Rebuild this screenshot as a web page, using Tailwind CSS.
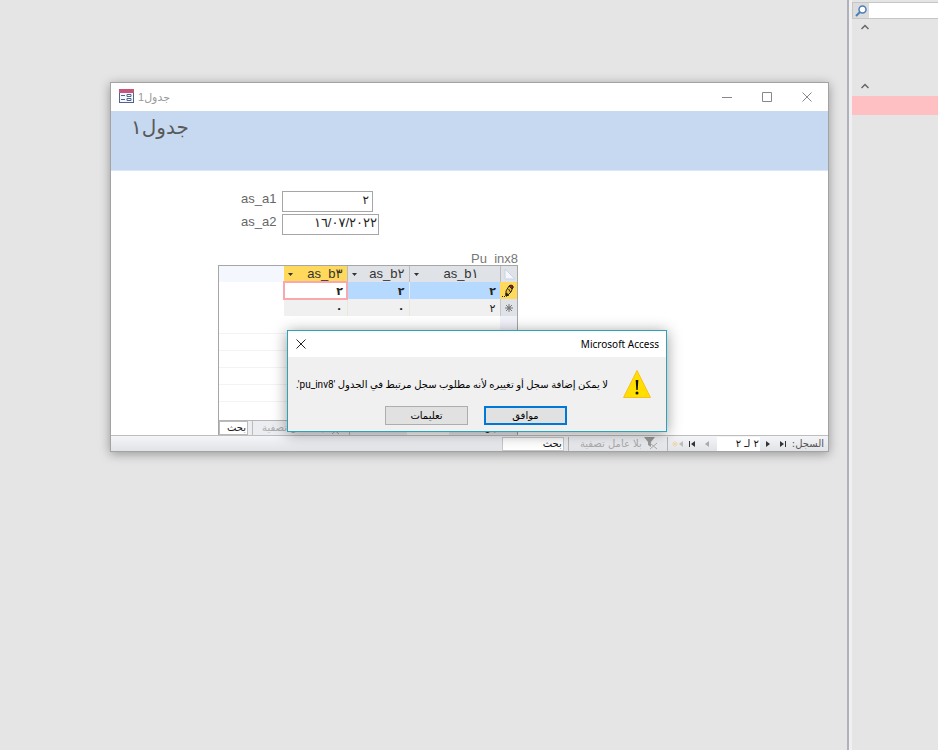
<!DOCTYPE html>
<html lang="ar">
<head>
    <meta charset="UTF-8">
    <title>جدول1</title>
    <meta name="viewport" content="width=device-width, initial-scale=1.0">
    <script src="https://cdn.jsdelivr.net/npm/@tailwindcss/browser@4"></script>
</head>
<body class="flex min-h-screen bg-[#e5e5e5] font-['Liberation_Sans','DejaVu_Sans',sans-serif] text-[#222]">

<main class="relative flex-1 pt-[82px] pl-[110px] pr-[18px]">
    <!-- Form window -->
    <section class="border border-[#a3a3a3] bg-white shadow-[0_2px_10px_rgba(0,0,0,0.35)]">
        <header class="flex h-7 items-center pr-px pl-2 text-[#999]">
            <svg class="mr-1 mb-[2px] h-[14px] w-[15px]" viewBox="0 0 15 14">
                <rect x="0.5" y="0.5" width="14" height="13" fill="#f4f7fc" stroke="#50648f"/>
                <rect width="15" height="4" fill="#c4567c"/>
                <path d="M2 6.5h4M2 10.5h4" stroke="#50648f"/>
                <path d="M8 5.5h4v2h-4zM8 9.5h4v2h-4z" fill="#fff" stroke="#50648f"/>
            </svg>
            <h1 class="flex-1 text-left text-[11px]" dir="rtl">جدول1</h1>
            <button class="flex h-7 w-10 items-center justify-center" aria-label="تصغير">
                <svg class="h-[10px] w-[10px]" viewBox="0 0 10 10"><path d="M0 5.500h10" stroke="#888"/></svg>
            </button>
            <button class="flex h-7 w-10 items-center justify-center" aria-label="تكبير">
                <svg class="h-[10px] w-[10px]" viewBox="0 0 10 10"><path d="M.5 .5h9v9h-9z" fill="none" stroke="#888"/></svg>
            </button>
            <button class="flex h-7 w-10 items-center justify-center" aria-label="إغلاق">
                <svg class="h-[10px] w-[10px]" viewBox="0 0 10 10"><path d="M.5 .5l9 9M9.500 .5l-9 9" stroke="#888"/></svg>
            </button>
        </header>

        <div class="h-[60px] border-b border-[#dce7f5] bg-[#c6d9f1] pl-5">
            <h2 class="inline-block text-xl leading-8 text-[#595959]" dir="rtl">جدول١</h2>
        </div>

        <div class="pl-[107px] pt-5">
            <!-- Fields -->
            <form class="pl-[23px] text-[13px] leading-4 text-[#666]">
                <div class="mb-[2px] flex">
                    <label for="as_a1" class="w-[41px]">as_a1</label>
                    <input id="as_a1" value="٢" dir="rtl" class="h-[21px] w-[91px] border border-[#a6a6a6] bg-white px-[3px] pb-1 text-[12px] text-[#222]">
                </div>
                <div class="flex">
                    <label for="as_a2" class="w-[41px]">as_a2</label>
                    <input id="as_a2" value="١٦/٠٧/٢٠٢٢" dir="ltr" class="h-[21px] w-[97px] border border-[#a6a6a6] bg-white px-px pb-1 text-right text-[13px] text-[#222]">
                </div>
            </form>

            <!-- Subform -->
            <div class="mt-4 w-[300px]">
                <h3 class="h-[14px] text-right text-[13px] leading-4 text-[#777]">Pu_inx8</h3>
                <div class="relative flex h-[170px] flex-col overflow-hidden border border-b-0 border-[#a6a6a6] bg-white">
                    <table class="w-full table-fixed border-collapse text-[11px] leading-4" dir="ltr">
                        <colgroup>
                            <col class="w-[65px]">
                            <col class="w-[63px]">
                            <col class="w-[62px]">
                            <col>
                            <col class="w-[17px]">
                        </colgroup>
                        <thead>
                            <tr class="h-4 bg-[#dfe3e8] text-[13px] text-[#333]">
                                <td class="bg-[#f5f7fe]"></td>
                                <th class="border-r border-[#b8bcc2] bg-[#ffd95c] p-0 font-normal">
                                    <div class="flex h-4 items-center justify-between px-1">
                                        <svg class="h-[3px] w-[5px]" viewBox="0 0 5 3"><path d="M0 0h5L2.500 3z" fill="#333"/></svg>
                                        <span>as_b٣</span>
                                    </div>
                                </th>
                                <th class="border-r border-[#b8bcc2] p-0 font-normal">
                                    <div class="flex h-4 items-center justify-between px-1">
                                        <svg class="h-[3px] w-[5px]" viewBox="0 0 5 3"><path d="M0 0h5L2.500 3z" fill="#333"/></svg>
                                        <span>as_b٢</span>
                                    </div>
                                </th>
                                <th class="border-r border-[#b8bcc2] p-0 font-normal">
                                    <div class="flex h-4 items-center px-1">
                                        <svg class="h-[3px] w-[5px]" viewBox="0 0 5 3"><path d="M0 0h5L2.500 3z" fill="#333"/></svg>
                                        <span class="flex-1 pl-2 text-center">as_b١</span>
                                    </div>
                                </th>
                                <td class="p-0">
                                    <svg class="h-4 w-4" viewBox="0 0 16 16"><path d="M4 3v10h10z" fill="#f4f7fc" stroke="#c9d3e4"/></svg>
                                </td>
                            </tr>
                        </thead>
                        <tbody class="text-right">
                            <tr class="h-[17px] bg-[#b5d9ff] font-bold">
                                <td class="bg-white"></td>
                                <td class="bg-white p-0 pr-1 outline-2 -outline-offset-1 outline-[#f9a9ae]">٢</td>
                                <td class="border-r border-[#e4eefa] p-0 pr-1">٢</td>
                                <td class="p-0 pr-1">٢</td>
                                <td class="bg-[#ffd95c] p-0">
                                    <svg class="h-4 w-4" viewBox="0 0 16 16">
                                        <path d="M6 8l3-5 4 1-2 5-4 4-1 0z" fill="#e9c21d" stroke="#222"/>
                                        <path d="M9 3l2-1 2 1v2l-1 1z" fill="#9c1c1c" stroke="#222"/>
                                        <path d="M8.500 6l2 3M6 13l0-3 3 2z" fill="#222" stroke="#222"/>
                                        <path d="M2 13.500h1M4 13.500h1" stroke="#222"/>
                                    </svg>
                                </td>
                            </tr>
                            <tr class="h-[17px] bg-[#f0f0f0]">
                                <td class="bg-white"></td>
                                <td class="border-r border-[#e8e8e0] p-0 pr-1 font-bold">٠</td>
                                <td class="border-r border-[#e8e8e0] p-0 pr-1 font-bold">٠</td>
                                <td class="p-0 pr-1">٢</td>
                                <td class="border-l border-[#c4c8ce] bg-[#dfe3e8] p-0">
                                    <svg class="h-4 w-4" viewBox="0 0 16 16">
                                        <path d="M8 4v8M4 8h8M5 5l6 6M11 5l-6 6" stroke="#777"/>
                                        <circle cx="8" cy="8" r="1.500" fill="#777"/>
                                    </svg>
                                </td>
                            </tr>
                            <tr class="h-[17px] border-b border-[#f3f3f3]"><td></td><td></td><td></td><td></td><td class="bg-[#f2f3fa]"></td></tr>
                            <tr class="h-[17px] border-b border-[#f3f3f3]"><td></td><td></td><td></td><td></td><td class="bg-[#f2f3fa]"></td></tr>
                            <tr class="h-[17px] border-b border-[#f3f3f3]"><td></td><td></td><td></td><td></td><td class="bg-[#f2f3fa]"></td></tr>
                            <tr class="h-[17px] border-b border-[#f3f3f3]"><td></td><td></td><td></td><td></td><td class="bg-[#f2f3fa]"></td></tr>
                            <tr class="h-[17px] border-b border-[#f3f3f3]"><td></td><td></td><td></td><td></td><td class="bg-[#f2f3fa]"></td></tr>
                        </tbody>
                    </table>
                    <div class="mt-auto flex h-[15px] shrink-0 items-center overflow-hidden border-t border-[#b5b5b5] bg-[#ebedf1] font-['DejaVu_Sans',sans-serif] text-[10px] leading-[14px]" dir="rtl">
                        <span class="pr-1">السجل:</span>
                        <span class="mr-8 w-[42px] bg-white text-center">٢ لـ ٢</span>
                        <div class="mr-auto flex h-[14px] w-[98px] items-center justify-center gap-[2px] border-x border-[#bbb] text-[#aaa]">
                            <svg class="h-[13px] w-[14px]" viewBox="0 0 14 13"><path d="M0 0h11L7 5v5L4 8V5z" fill="#999"/><path d="M6 6l7 6M13 6l-7 6" stroke="#aaa"/></svg>
                            <span>بلا عامل تصفية</span>
                        </div>
                        <input value="بحث" aria-label="بحث" class="mr-1 h-[14px] w-[29px] border border-[#bbb] bg-white px-px">
                    </div>
                </div>
            </div>
        </div>

        <!-- Record navigation -->
        <footer class="flex h-4 items-center overflow-hidden border-t border-[#bdbdbd] bg-linear-to-b from-[#f4f5f8] to-[#e1e3e7] font-['DejaVu_Sans',sans-serif] text-[10px] leading-[14px]" dir="rtl">
            <span class="pr-1 text-[#555]">السجل:</span>
            <button class="mr-[6px] flex h-[14px] w-2 items-center" aria-label="الأول">
                <svg class="h-[6px] w-[6px]" viewBox="0 0 6 6"><path d="M0 0l4 3-4 3zM5 0h1v6H5z" fill="#333"/></svg>
            </button>
            <button class="mr-2 flex h-[14px] w-2 items-center" aria-label="السابق">
                <svg class="h-[6px] w-[4px]" viewBox="0 0 4 6"><path d="M0 0l4 3-4 3z" fill="#333"/></svg>
            </button>
            <input value="٢ لـ ٢" aria-label="السجل الحالي" class="mr-[2px] h-[14px] w-[43px] bg-white px-px text-[10px] text-[#111]">
            <button class="mr-2 flex h-[14px] w-2 items-center" aria-label="التالي">
                <svg class="h-[6px] w-[4px]" viewBox="0 0 4 6"><path d="M4 0L0 3l4 3z" fill="#aaa"/></svg>
            </button>
            <button class="mr-[6px] flex h-[14px] w-2 items-center" aria-label="الأخير">
                <svg class="h-[6px] w-[6px]" viewBox="0 0 6 6"><path d="M6 0L2 3l4 3zM0 0h1v6H0z" fill="#333"/></svg>
            </button>
            <button class="mr-1 flex h-[14px] w-3 items-center" aria-label="جديد">
                <svg class="h-[6px] w-[11px]" viewBox="0 0 11 6"><path d="M11 0L7 3l4 3z" fill="#bbb"/><path d="M3 0v6M0 3h6M1 1l4 4M5 1L1 5" stroke="#ecd9b0"/></svg>
            </button>
            <button class="mr-[3px] flex h-[14px] w-[100px] items-center gap-[2px] border-x border-[#b5b5b5] pr-[9px] text-[#aaa]">
                <svg class="h-[13px] w-[14px] shrink-0" viewBox="0 0 14 13"><path d="M0 0h11L7 5v5L4 8V5z" fill="#999"/><path d="M6 6l7 6M13 6l-7 6" stroke="#aaa"/></svg>
                <span class="whitespace-nowrap">بلا عامل تصفية</span>
            </button>
            <input value="بحث" aria-label="بحث" class="mr-1 h-[14px] w-[62px] border border-[#c8c8c8] bg-white px-px text-[#111]">
        </footer>
    </section>

    <!-- Message box -->
    <div role="dialog" aria-labelledby="msg-title" dir="rtl" class="absolute left-[287px] top-[330px] w-[380px] border border-[#2ba3ba] bg-[#f0f0f0] text-black shadow-[0_2px_14px_rgba(0,0,0,0.4)]">
        <div class="flex h-[26px] items-center justify-between bg-white pr-[7px] pl-[7px]">
            <h2 id="msg-title" class="font-['Noto_Sans',sans-serif] text-[10px]">Microsoft Access</h2>
            <button class="flex h-5 w-3 items-center justify-center" aria-label="إغلاق">
                <svg class="h-[10px] w-[10px]" viewBox="0 0 10 10"><path d="M.5 .5l9 9M9.500 .5l-9 9" stroke="#222"/></svg>
            </button>
        </div>
        <div class="flex items-center gap-[15px] pr-[15px] pt-[13px]">
            <svg class="h-7 w-7 shrink-0" viewBox="0 0 28 28">
                <path d="M14 .5L27.500 27.500H.5z" fill="#ffde00" stroke="#f8c01e"/>
                <path d="M12.700 10h2.600l-.6 10h-1.400z" fill="#111"/>
                <circle cx="14" cy="23" r="1.500" fill="#111"/>
            </svg>
            <p class="whitespace-nowrap font-['Roboto','DejaVu_Sans',sans-serif] text-[10px]">لا يمكن إضافة سجل أو تغييره لأنه مطلوب سجل مرتبط في الجدول 'pu_inv8'.</p>
        </div>
        <div class="flex gap-4 pt-2 pb-[6px] pr-[99px] font-['DejaVu_Sans',sans-serif] text-[10px]">
            <button class="h-[19px] w-[83px] border-2 border-[#0078d7] bg-[#e1e1e1] leading-[15px]">موافق</button>
            <button class="h-[19px] w-[83px] border border-[#adadad] bg-[#e1e1e1] leading-[17px]">تعليمات</button>
        </div>
    </div>
</main>

<!-- Navigation pane -->
<aside class="flex w-[91px] border-l-2 border-[#b0b2b8]">
    <div class="w-[3px] bg-[#f0f0f2]"></div>
    <div class="flex-1 pt-[2px]">
        <div class="flex h-[17px] border border-r-0 border-[#c6c6c6]">
            <button class="flex w-4 items-center justify-center bg-[#dcdcdc]" aria-label="بحث">
                <svg class="h-3 w-3" viewBox="0 0 12 12"><circle cx="7.500" cy="4.500" r="3.500" fill="#fff" stroke="#4a7ebb" stroke-width="1.500"/><path d="M5 7l-4 4" stroke="#4a7ebb" stroke-width="2"/></svg>
            </button>
            <input aria-label="بحث" class="w-0 min-w-0 flex-1 bg-white">
        </div>
        <button class="mt-[5px] ml-[9px] block h-[6px] w-2" aria-label="طي">
            <svg class="h-[6px] w-2" viewBox="0 0 8 6"><path d="M.5 5L4 1.500 7.500 5" fill="none" stroke="#666" stroke-width="1.500"/></svg>
        </button>
        <button class="mt-[53px] ml-[9px] block h-[6px] w-2" aria-label="طي">
            <svg class="h-[6px] w-2" viewBox="0 0 8 6"><path d="M.5 5L4 1.500 7.500 5" fill="none" stroke="#666" stroke-width="1.500"/></svg>
        </button>
        <div class="mt-[7px] h-[19px] bg-[#ffc0c3]"></div>
    </div>
</aside>

</body>
</html>
